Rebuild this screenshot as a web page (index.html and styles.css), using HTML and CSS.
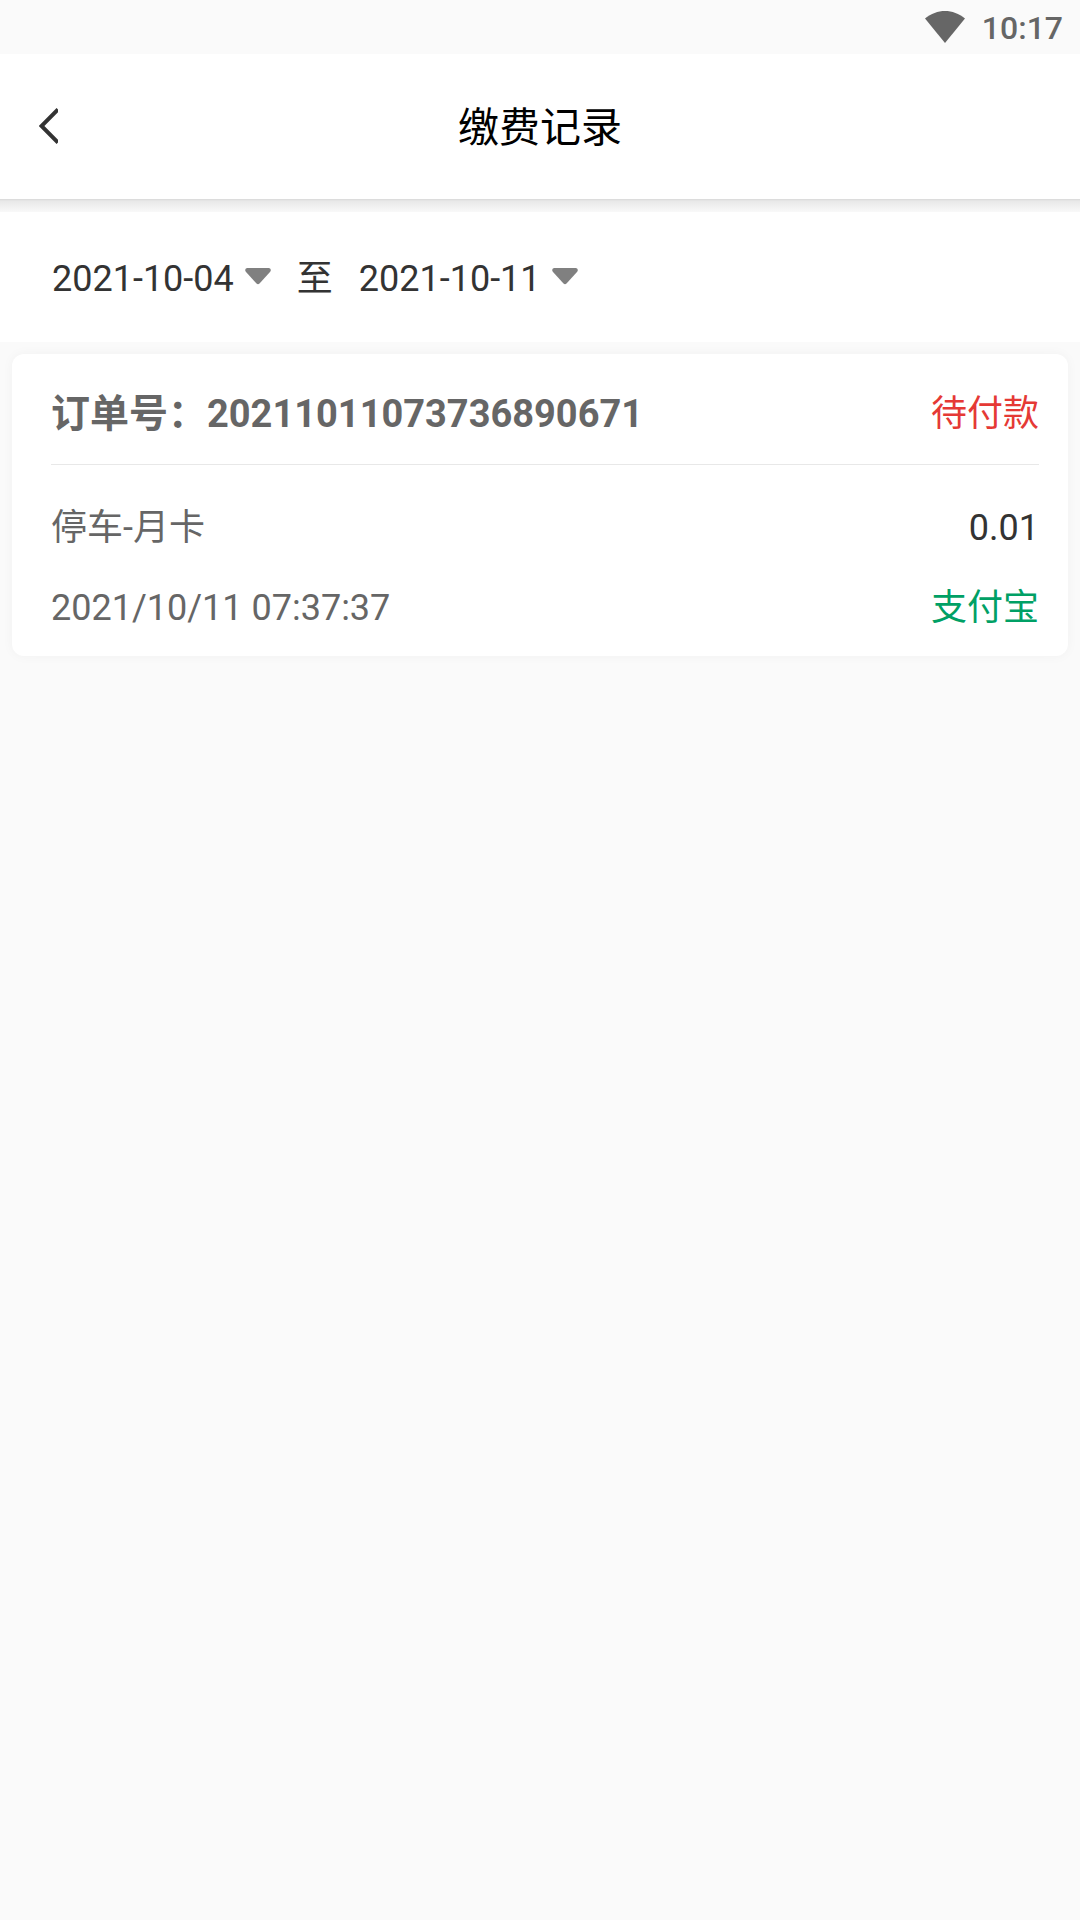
FILE: index.html
```html
<!DOCTYPE html>
<html lang="zh-CN">
<head>
  <meta charset="utf-8">
  <meta name="viewport" content="width=device-width, initial-scale=1">
  <title>缴费记录</title>
  <link rel="stylesheet" href="styles.css">
</head>
<body>
  <div class="status-bar">
    <svg class="wifi" viewBox="0 0 40 32" aria-hidden="true"><path d="M0 7.500C6 2.500 13 0 20 0s14 2.500 20 7.500L20 32z"/></svg>
    <time class="clock">10:17</time>
  </div>
  <header class="app-bar">
    <button class="back" type="button" aria-label="返回">
      <svg viewBox="0 0 19 36" aria-hidden="true"><path d="M19 1.500 2.500 18 19 34.500"/></svg>
    </button>
    <h1 class="title">缴费记录</h1>
  </header>
  <main>
    <section class="filter" aria-label="日期范围">
      <button class="date" type="button">2021-10-04
        <svg class="caret" viewBox="0 0 26 17" aria-hidden="true"><path d="M2 0h22q3 1 1 4L14.500 15.500q-1.500 1.500-3 0L1 4Q-1 1 2 0z"/></svg>
      </button>
      <span class="to">至</span>
      <button class="date" type="button">2021-10-11
        <svg class="caret" viewBox="0 0 26 17" aria-hidden="true"><path d="M2 0h22q3 1 1 4L14.500 15.500q-1.500 1.500-3 0L1 4Q-1 1 2 0z"/></svg>
      </button>
    </section>
    <article class="order">
      <div class="order-head">
        <h2 class="order-no">订单号：<span class="digits">20211011073736890671</span></h2>
        <span class="state">待付款</span>
      </div>
      <div class="order-body">
        <div class="row">
          <span>停车-月卡</span>
          <span class="amount">0.01</span>
        </div>
        <div class="row">
          <time>2021/10/11 07:37:37</time>
          <span class="method">支付宝</span>
        </div>
      </div>
    </article>
  </main>
</body>
</html>
```
FILE: styles.css
```css
* {
  box-sizing: border-box;
}

body {
  margin: 0;
  background: #fafafa;
  color: #333;
  font-family: Roboto, "Noto Sans CJK SC", sans-serif;
  font-size: 36px;
  line-height: 44px;
}

button {
  padding: 0;
  border: 0;
  background: none;
  color: inherit;
  font: inherit;
}

.status-bar {
  display: flex;
  align-items: center;
  justify-content: flex-end;
  gap: 17px;
  height: 54px;
  padding: 2px 17px 0 0;
  color: #666;
  font-size: 32px;
  font-weight: 500;
}

.wifi {
  width: 40px;
  height: 32px;
  margin-bottom: 2px;
  fill: #666;
}

.app-bar {
  display: grid;
  grid-template-columns: 100px 1fr 100px;
  align-items: center;
  height: 145px;
  background: #fff;
}

.back {
  display: flex;
  align-items: center;
  height: 100%;
  padding: 0 0 1px 39px;
}

.back svg {
  width: 19px;
  height: 36px;
  fill: none;
  stroke: #333;
  stroke-width: 4;
}

.title {
  margin: 0;
  padding-top: 2px;
  color: #000;
  font-size: 41px;
  font-weight: 400;
  text-align: center;
}

/* The bar's shadow falls on a short band at the top of the filter. */
.filter {
  display: flex;
  align-items: center;
  gap: 26px;
  height: 143px;
  padding: 16px 52px 0;
  background: #fff linear-gradient(#d8d8d8, #e8e8e8 2px, #f9f9f9) top / 100% 13px no-repeat;
}

.date {
  display: flex;
  align-items: center;
  gap: 11px;
}

.caret {
  width: 26px;
  height: 17px;
  margin-bottom: 4px;
  fill: #808080;
}

.order {
  margin: 12px;
  padding: 0 29px 0 39px;
  border-radius: 12px;
  background: #fff;
  box-shadow: 0 0 12px rgba(0, 0, 0, 0.04);
  color: #666;
}

.order-head {
  display: flex;
  align-items: center;
  justify-content: space-between;
  height: 111px;
  padding-top: 10px;
  border-bottom: 1px solid #e8e8e8;
}

.order-no {
  margin: 0;
  font-size: 39px;
  font-weight: 700;
}

.digits {
  font-size: 38px;
}

.state {
  color: #e53935;
}

.order-body {
  display: grid;
  gap: 36px;
  padding: 41px 0 26px;
}

.row {
  display: flex;
  justify-content: space-between;
}

.amount {
  color: #333;
}

.method {
  color: #00a065;
}
```
